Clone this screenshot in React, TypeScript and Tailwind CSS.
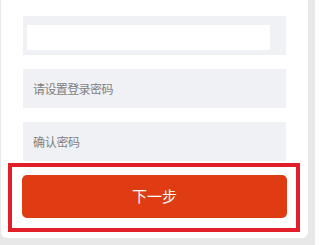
export default function App() {
  return (
    <div className="w-[315px] h-[245px] bg-[#e8e8e8] overflow-hidden font-['Noto_Sans_CJK_SC','Noto_Sans',sans-serif]">
      <div className="ml-[1px] w-[307px] bg-white rounded-b-[6px] pt-4 pb-[6px]">
        <div className="mx-[22px] h-[39px] bg-[#eff1f5] pl-1 pr-4 pt-[9px] pb-[5px]">
          <div className="h-[25px] bg-white" />
        </div>
        <div className="mx-[22px] mt-[14px] h-[39px] bg-[#eff1f5] flex items-center pl-[10px] text-[12px] tracking-[-0.6px] text-[#7f7f7f]">
          请设置登录密码
        </div>
        <div className="mx-[22px] mt-[14px] h-[39px] bg-[#eff1f5] flex items-center pl-[10px] text-[12px] tracking-[-0.3px] text-[#7f7f7f]">
          确认密码
        </div>
        <div className="ml-[7px] w-[292px] mt-[2px] border-4 border-[#e21e2a] pl-[10px] pr-[9px] pt-2 pb-[10px]">
          <button className="w-full h-[43px] rounded-[5px] bg-[#e03c14] text-white text-[15px] flex items-center justify-center">
            下一步
          </button>
        </div>
      </div>
    </div>
  );
}
